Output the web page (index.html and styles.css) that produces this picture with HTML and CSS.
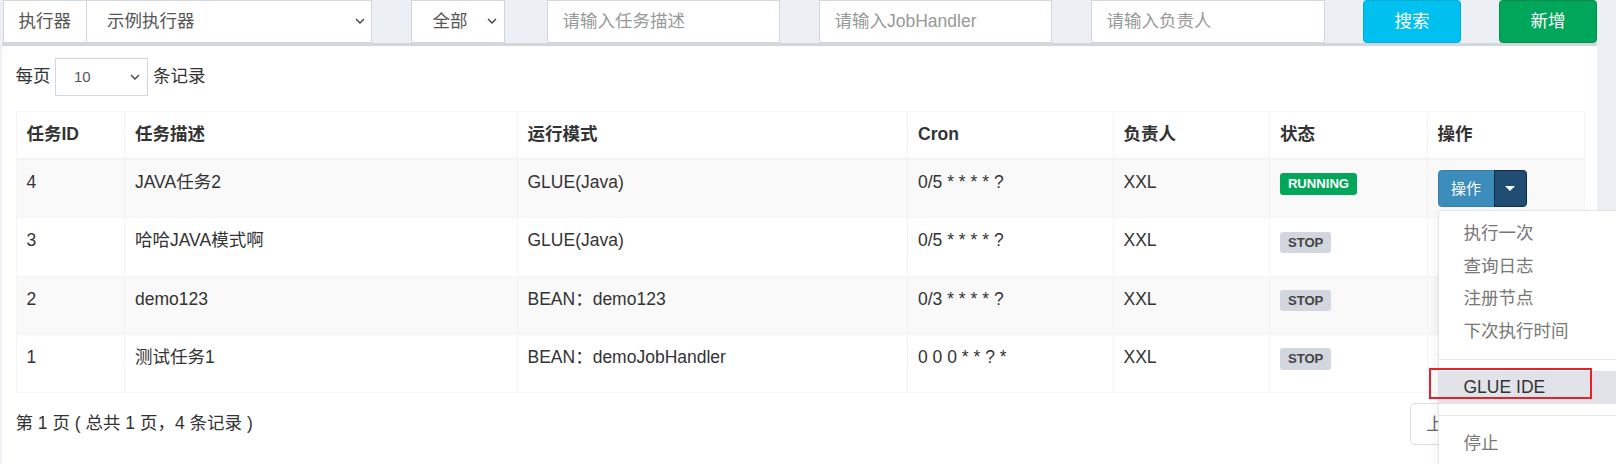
FILE: index.html
```html
<!DOCTYPE html>
<html lang="zh-CN">
<head>
<meta charset="utf-8">
<title>任务管理</title>
<link rel="stylesheet" href="styles.css">
</head>
<body>
<div class="page">
  <div class="filters">
    <div class="input-group">
      <span class="addon">执行器</span>
      <div class="select sel-exec"><span>示例执行器</span><svg class="chev" width="10" height="6" viewBox="0 0 10 6"><path d="M1 1l4 4 4-4" fill="none" stroke="#444" stroke-width="1.4"/></svg></div>
    </div>
    <div class="select sel-status"><span>全部</span><svg class="chev" width="10" height="6" viewBox="0 0 10 6"><path d="M1 1l4 4 4-4" fill="none" stroke="#444" stroke-width="1.4"/></svg></div>
    <input class="input" type="text" placeholder="请输入任务描述">
    <input class="input" type="text" placeholder="请输入JobHandler">
    <input class="input input-owner" type="text" placeholder="请输入负责人">
    <button class="btn btn-info" type="button">搜索</button>
    <button class="btn btn-success" type="button">新增</button>
  </div>

  <div class="box">
    <div class="length-row">
      <span>每页</span>
      <div class="select sel-length"><span>10</span><svg class="chev" width="10" height="6" viewBox="0 0 10 6"><path d="M1 1l4 4 4-4" fill="none" stroke="#444" stroke-width="1.4"/></svg></div>
      <span>条记录</span>
    </div>

    <table class="grid">
      <colgroup>
        <col class="c-id"><col class="c-desc"><col class="c-mode"><col class="c-cron"><col class="c-owner"><col class="c-status"><col class="c-op">
      </colgroup>
      <thead>
        <tr><th>任务ID</th><th>任务描述</th><th>运行模式</th><th>Cron</th><th>负责人</th><th>状态</th><th>操作</th></tr>
      </thead>
      <tbody>
        <tr>
          <td>4</td><td>JAVA任务2</td><td>GLUE(Java)</td><td>0/5 * * * * ?</td><td>XXL</td>
          <td><span class="label label-success">RUNNING</span></td>
          <td>
            <div class="btn-group open">
              <button class="btn-sm btn-primary" type="button">操作</button>
              <button class="btn-sm btn-primary toggle" type="button"><span class="caret"></span></button>
              <ul class="dropdown-menu">
                <li><a>执行一次</a></li>
                <li><a>查询日志</a></li>
                <li><a>注册节点</a></li>
                <li><a>下次执行时间</a></li>
                <li class="divider"></li>
                <li class="hover"><a>GLUE IDE</a><span class="mark"></span></li>
                <li class="divider"></li>
                <li><a>停止</a></li>
              </ul>
            </div>
          </td>
        </tr>
        <tr>
          <td>3</td><td>哈哈JAVA模式啊</td><td>GLUE(Java)</td><td>0/5 * * * * ?</td><td>XXL</td>
          <td><span class="label label-default">STOP</span></td>
          <td><div class="btn-group covered"><button class="btn-sm btn-primary" type="button">操作</button><button class="btn-sm btn-primary toggle" type="button"><span class="caret"></span></button></div></td>
        </tr>
        <tr>
          <td>2</td><td>demo123</td><td>BEAN：demo123</td><td>0/3 * * * * ?</td><td>XXL</td>
          <td><span class="label label-default">STOP</span></td>
          <td><div class="btn-group covered"><button class="btn-sm btn-primary" type="button">操作</button><button class="btn-sm btn-primary toggle" type="button"><span class="caret"></span></button></div></td>
        </tr>
        <tr>
          <td>1</td><td>测试任务1</td><td>BEAN：demoJobHandler</td><td>0 0 0 * * ? *</td><td>XXL</td>
          <td><span class="label label-default">STOP</span></td>
          <td><div class="btn-group covered"><button class="btn-sm btn-primary" type="button">操作</button><button class="btn-sm btn-primary toggle" type="button"><span class="caret"></span></button></div></td>
        </tr>
      </tbody>
    </table>

    <div class="footer">
      <div class="info">第 1 页 ( 总共 1 页，4 条记录 )</div>
      <ul class="pagination">
        <li><a class="first">上页</a></li>
        <li><a class="active covered">1</a></li>
        <li><a class="last covered">下页</a></li>
      </ul>
    </div>
  </div>
</div>
</body>
</html>
```

FILE: styles.css
```css
html, body {
  margin: 0;
  padding: 0;
  overflow: hidden;
}
body {
  width: 1616px;
  height: 464px;
  background: #ecf0f5;
  font-family: "Liberation Sans", Arial, "Noto Sans CJK SC", sans-serif;
  font-size: 17.5px;
  line-height: 25px;
  color: #333;
}
.page {
  padding-left: 2px;
  width: 1595px;
}

/* ---------- filter bar ---------- */
.filters {
  display: flex;
  height: 42.5px;
  padding-left: 0.5px;
}
.input-group {
  display: flex;
  width: 369px;
  height: 42.5px;
  margin-right: 39px;
}
.addon {
  box-sizing: border-box;
  height: 42.5px;
  padding: 0 15px;
  background: #fff;
  border: 1px solid #d2d6de;
  color: #555;
  display: flex;
  align-items: center;
}
.select {
  box-sizing: border-box;
  display: flex;
  align-items: center;
  justify-content: space-between;
  background: #fff;
  border: 1px solid #d2d6de;
  color: #555;
}
.sel-exec {
  flex: 1;
  border-left: 0;
  padding: 0 6px 0 20px;
}
.sel-status {
  width: 94px;
  height: 42.5px;
  margin-right: 42px;
  padding: 0 7px 0 21px;
}
.chev {
  flex: none;
}
.input {
  box-sizing: border-box;
  width: 233.5px;
  height: 42.5px;
  margin: 0 38.5px 0 0;
  padding: 0 15px;
  border: 1px solid #d2d6de;
  border-radius: 0;
  background: #fff;
  font: inherit;
  color: #555;
  outline: none;
}
.input::placeholder {
  color: #999;
}
.input-owner {
  width: 234px;
}
.btn {
  box-sizing: border-box;
  width: 98px;
  height: 42.5px;
  border-radius: 3.75px;
  border: 1px solid transparent;
  color: #fff;
  font: inherit;
  padding: 0;
}
.btn-info {
  background: #00c0ef;
  border-color: #00acd6;
  margin-right: 38px;
}
.btn-success {
  background: #00a65a;
  border-color: #008d4c;
}

/* ---------- box ---------- */
.box {
  background: #fff;
  border-top: 3.75px solid #d2d6de;
  padding: 12.5px 13px 0 13.5px;
  height: 420px;
}
.length-row {
  display: flex;
  align-items: center;
  height: 37.5px;
  margin-bottom: 15.5px;
}
.sel-length {
  width: 93px;
  height: 37.5px;
  margin: 0 5px 0 4.5px;
  padding: 0 7px 0 18px;
  font-size: 15px;
}

/* ---------- table ---------- */
.grid {
  width: 1568.5px;
  table-layout: fixed;
  border-collapse: collapse;
  border: 1px solid #f4f4f4;
}
.c-id { width: 108.5px; }
.c-desc { width: 392.5px; }
.c-mode { width: 390.5px; }
.c-cron { width: 205.5px; }
.c-owner { width: 156.5px; }
.c-status { width: 157.5px; }
.c-op { width: 157.5px; }
.grid th,
.grid td {
  border: 1px solid #f4f4f4;
  padding: 10px;
  text-align: left;
  vertical-align: top;
  line-height: 25px;
}
.grid thead th {
  border-bottom-width: 2.5px;
  padding-bottom: 11px;
  font-weight: bold;
  color: #333;
}
.grid tbody tr:nth-child(odd) {
  background: #f9f9f9;
}
.label {
  display: inline;
  font-size: 13.125px;
  font-weight: bold;
  line-height: 1;
  padding: 2.6px 7.9px 3.9px;
  border-radius: 3.3px;
  white-space: nowrap;
}
.label-success {
  background: #00a65a;
  color: #fff;
}
.label-default {
  background: #d2d6de;
  color: #444;
}

.btn-group {
  position: relative;
  display: flex;
  width: max-content;
}
.covered {
  visibility: hidden;
}
.btn-sm {
  box-sizing: border-box;
  height: 37.25px;
  border: 1px solid #367fa9;
  background: #3c8dbc;
  color: #fff;
  font: inherit;
  font-size: 15px;
  line-height: 21px;
  padding: 0 12.5px;
  border-radius: 3.75px 0 0 3.75px;
}
.btn-sm.toggle {
  width: 33px;
  padding: 0;
  border-radius: 0 3.75px 3.75px 0;
  background: #204d74;
  border-color: #122b40;
  margin-left: -1px;
  display: flex;
  align-items: center;
  justify-content: center;
}
.caret {
  width: 0;
  height: 0;
  border-top: 5px solid #fff;
  border-left: 5px solid transparent;
  border-right: 5px solid transparent;
}

.dropdown-menu {
  position: absolute;
  top: 100%;
  left: 0;
  z-index: 10;
  margin: 3px 0 0;
  padding: 6.25px 0 20px;
  width: 200px;
  list-style: none;
  background: #fff;
  border: 1px solid #e3e3e3;
  border-radius: 4px;
  box-shadow: 0 6px 12px rgba(0, 0, 0, 0.08);
}
.dropdown-menu li {
  position: relative;
}
.dropdown-menu a {
  display: block;
  padding: 3.75px 25px;
  line-height: 25px;
  color: #777;
  white-space: nowrap;
}
.dropdown-menu .hover a {
  background: #e1e3e9;
  color: #333;
}
.dropdown-menu .divider {
  height: 1.25px;
  margin: 11.25px 0;
  background: #e5e5e5;
}
.mark {
  position: absolute;
  left: -10px;
  top: -3px;
  width: 163px;
  height: 31px;
  box-sizing: border-box;
  border: 2px solid #e8202a;
}

/* ---------- footer ---------- */
.footer {
  display: flex;
  justify-content: space-between;
  margin-top: 7.5px;
}
.info {
  padding-top: 10px;
  color: #333;
}
.pagination {
  display: flex;
  list-style: none;
  margin: 2.5px 0;
  padding: 0;
}
.pagination a {
  display: block;
  padding: 7.5px 15px;
  line-height: 25px;
  border: 1px solid #ddd;
  margin-left: -1px;
  background: #fff;
  color: #666;
}
.pagination a.first {
  border-radius: 5px 0 0 5px;
}
.pagination a.last {
  border-radius: 0 5px 5px 0;
}
.pagination a.active {
  background: #3c8dbc;
  border-color: #367fa9;
  color: #fff;
}
```
